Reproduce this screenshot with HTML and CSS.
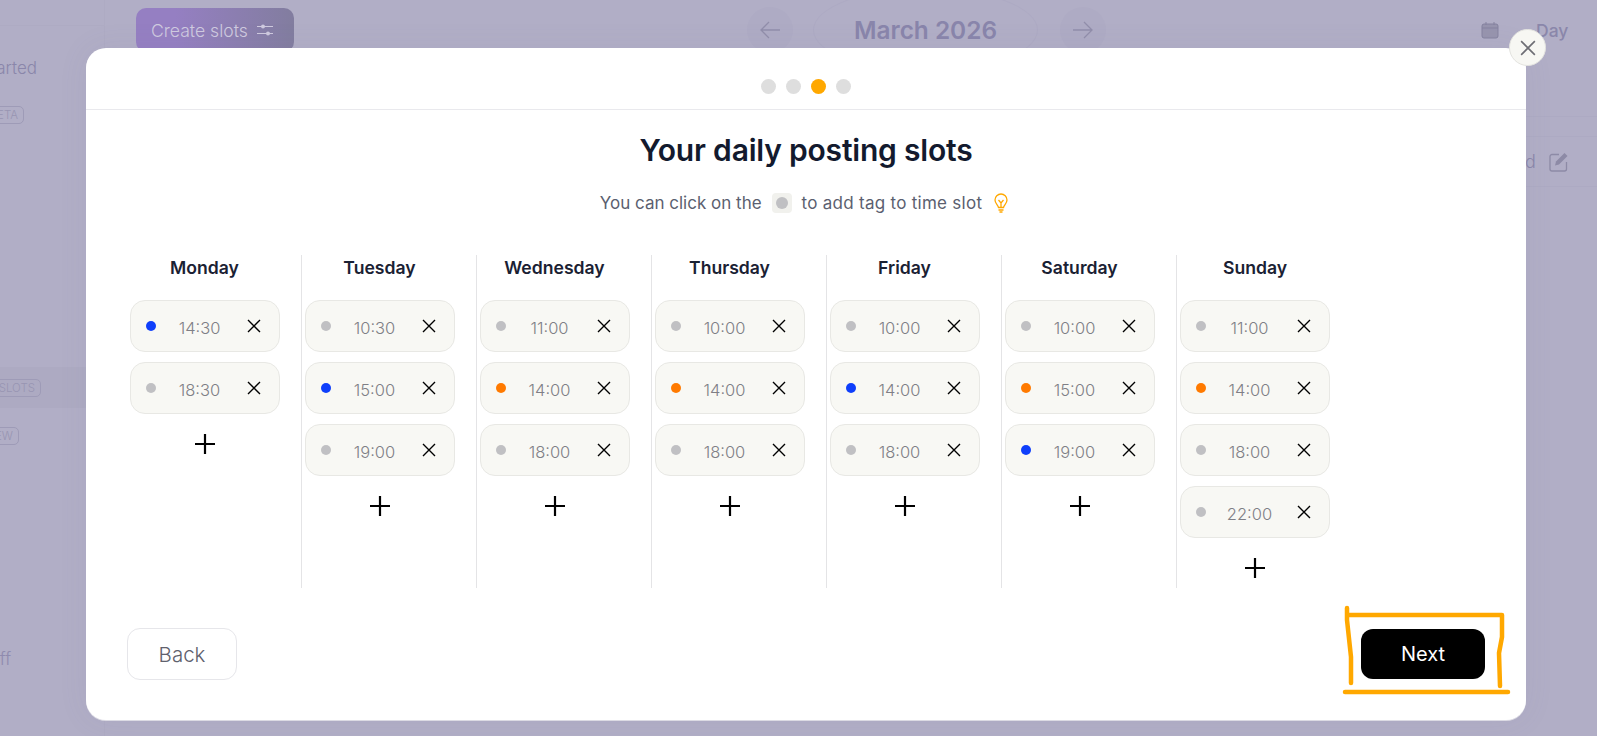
FILE: index.html
```html
<!DOCTYPE html>
<html lang="en">
<head>
    <meta charset="UTF-8">
    <meta name="viewport" content="width=device-width, initial-scale=1.0">
    <title>Your daily posting slots</title>
    <link rel="stylesheet" href="styles.css">
</head>
<body>
    <svg class="defs" width="0" height="0">
        <symbol id="cross" viewBox="0 0 14 14"><path d="M1 1l12 12M13 1L1 13" fill="none" stroke="currentColor" stroke-width="1.4"/></symbol>
        <symbol id="plus" viewBox="0 0 20 20"><path d="M0 10h20M10 0v20" fill="none" stroke="currentColor" stroke-width="2.2"/></symbol>
    </svg>

    <!-- dimmed page behind the modal -->
    <div class="app">
        <aside class="sidebar">
            <div class="side-top"></div>
            <div class="side-item side-started">Get started</div>
            <div class="side-item side-beta"><span class="badge">BETA</span></div>
            <div class="side-item side-slots"><span class="badge">SLOTS</span></div>
            <div class="side-item side-new"><span class="badge">NEW</span></div>
            <div class="side-item side-off">Off</div>
        </aside>
        <main class="main">
            <div class="topbar">
                <button class="create-btn">Create slots
                    <svg width="16" height="14" viewBox="0 0 16 14"><path d="M0 3.5h16M0 10.5h16" stroke="currentColor" fill="none"/><circle cx="6" cy="3.5" r="2" fill="currentColor"/><circle cx="11" cy="10.5" r="2" fill="currentColor"/></svg>
                </button>
                <div class="arrow-btn arrow-prev">
                    <svg width="20" height="18" viewBox="0 0 20 18"><path d="M20 9H1M9 1L1 9l8 8" fill="none" stroke="currentColor" stroke-width="1.3"/></svg>
                </div>
                <div class="month">March 2026</div>
                <div class="arrow-btn">
                    <svg width="20" height="18" viewBox="0 0 20 18"><path d="M0 9h19M11 1l8 8-8 8" fill="none" stroke="currentColor" stroke-width="1.3"/></svg>
                </div>
                <svg class="cal-icon" width="18" height="18" viewBox="0 0 18 18"><rect x="1" y="3" width="16" height="14" rx="2" fill="#9794ae" stroke="#85829f"/><path d="M1 7h16M5 1v3M13 1v3" stroke="#85829f" fill="none"/></svg>
                <div class="view-switch">Day</div>
            </div>
            <div class="board">
                <div class="board-row board-row-short"></div>
                <div class="board-row board-row-edit">
                    <span class="board-text">d</span>
                    <svg width="20" height="20" viewBox="0 0 20 20"><path d="M10 2.5H3a2 2 0 0 0-2 2V17a2 2 0 0 0 2 2h12.500a2 2 0 0 0 2-2v-7" fill="none" stroke="#8d8aa6" stroke-width="1.300"/><path d="M15.500 1l3 3-8.500 8.500-4 1 1-4z" fill="#8d8aa6"/></svg>
                </div>
            </div>
        </main>
    </div>

    <div class="modal">
        <button class="modal-close"><svg width="16" height="16"><use href="#cross"/></svg></button>

        <div class="modal-head">
            <span class="step"></span>
            <span class="step"></span>
            <span class="step step-on"></span>
            <span class="step"></span>
        </div>

        <h1 class="title">Your daily posting slots</h1>
        <p class="hint">
            You can click on the
            <span class="hint-chip"><span class="dot"></span></span>
            <span class="hint-tail">to add tag to time slot</span>
            <svg class="bulb" width="14" height="20" viewBox="0 0 14 20"><path d="M4.500 14.500C4 12 1 10.500 1 7a6 6 0 0 1 12 0c0 3.500-3 5-3.500 7.500z" fill="none" stroke="#ffa800" stroke-width="1.300"/><path d="M4.500 7L7 10l2.500-3M7 10v4M4.500 17h5M5.500 19h3" fill="none" stroke="#ffa800" stroke-width="1.300"/></svg>
        </p>

        <div class="days">
            <section class="day">
                <h3>Monday</h3>
                <div class="slot"><span class="dot dot-blue"></span><span class="time">14:30</span><svg class="x"><use href="#cross"/></svg></div>
                <div class="slot"><span class="dot"></span><span class="time">18:30</span><svg class="x"><use href="#cross"/></svg></div>
                <svg class="add"><use href="#plus"/></svg>
            </section>
            <section class="day">
                <h3>Tuesday</h3>
                <div class="slot"><span class="dot"></span><span class="time">10:30</span><svg class="x"><use href="#cross"/></svg></div>
                <div class="slot"><span class="dot dot-blue"></span><span class="time">15:00</span><svg class="x"><use href="#cross"/></svg></div>
                <div class="slot"><span class="dot"></span><span class="time">19:00</span><svg class="x"><use href="#cross"/></svg></div>
                <svg class="add"><use href="#plus"/></svg>
            </section>
            <section class="day">
                <h3>Wednesday</h3>
                <div class="slot"><span class="dot"></span><span class="time">11:00</span><svg class="x"><use href="#cross"/></svg></div>
                <div class="slot"><span class="dot dot-orange"></span><span class="time">14:00</span><svg class="x"><use href="#cross"/></svg></div>
                <div class="slot"><span class="dot"></span><span class="time">18:00</span><svg class="x"><use href="#cross"/></svg></div>
                <svg class="add"><use href="#plus"/></svg>
            </section>
            <section class="day">
                <h3>Thursday</h3>
                <div class="slot"><span class="dot"></span><span class="time">10:00</span><svg class="x"><use href="#cross"/></svg></div>
                <div class="slot"><span class="dot dot-orange"></span><span class="time">14:00</span><svg class="x"><use href="#cross"/></svg></div>
                <div class="slot"><span class="dot"></span><span class="time">18:00</span><svg class="x"><use href="#cross"/></svg></div>
                <svg class="add"><use href="#plus"/></svg>
            </section>
            <section class="day">
                <h3>Friday</h3>
                <div class="slot"><span class="dot"></span><span class="time">10:00</span><svg class="x"><use href="#cross"/></svg></div>
                <div class="slot"><span class="dot dot-blue"></span><span class="time">14:00</span><svg class="x"><use href="#cross"/></svg></div>
                <div class="slot"><span class="dot"></span><span class="time">18:00</span><svg class="x"><use href="#cross"/></svg></div>
                <svg class="add"><use href="#plus"/></svg>
            </section>
            <section class="day">
                <h3>Saturday</h3>
                <div class="slot"><span class="dot"></span><span class="time">10:00</span><svg class="x"><use href="#cross"/></svg></div>
                <div class="slot"><span class="dot dot-orange"></span><span class="time">15:00</span><svg class="x"><use href="#cross"/></svg></div>
                <div class="slot"><span class="dot dot-blue"></span><span class="time">19:00</span><svg class="x"><use href="#cross"/></svg></div>
                <svg class="add"><use href="#plus"/></svg>
            </section>
            <section class="day day-last">
                <h3>Sunday</h3>
                <div class="slot"><span class="dot"></span><span class="time">11:00</span><svg class="x"><use href="#cross"/></svg></div>
                <div class="slot"><span class="dot dot-orange"></span><span class="time">14:00</span><svg class="x"><use href="#cross"/></svg></div>
                <div class="slot"><span class="dot"></span><span class="time">18:00</span><svg class="x"><use href="#cross"/></svg></div>
                <div class="slot"><span class="dot"></span><span class="time">22:00</span><svg class="x"><use href="#cross"/></svg></div>
                <svg class="add"><use href="#plus"/></svg>
            </section>
        </div>

        <div class="modal-foot">
            <button class="btn-back">Back</button>
            <button class="btn-next">Next</button>
        </div>
    </div>

    <!-- hand drawn highlight around Next -->
    <svg class="scribble" width="180" height="100" viewBox="0 0 180 100">
        <path d="M7 8v12l4 37v26M7 15h155M162 15v22l-3 16 1 33M5 92h163" fill="none" stroke="#ffa800" stroke-width="4.500" stroke-linecap="round" stroke-linejoin="round"/>
    </svg>
</body>
</html>
```

FILE: styles.css
```css
*
{
    box-sizing: border-box;
}
body
{
    margin: 0;
    height: 736px;
    overflow: hidden;
    position: relative;
    background-color: #b1aec6;
    font-family: "Inter", "Liberation Sans", sans-serif;
}
button
{
    font-family: inherit;
    cursor: pointer;
}
.defs
{
    position: absolute;
}

/* page behind */
.app
{
    display: flex;
    height: 736px;
    color: #8a86aa;
}
.sidebar
{
    width: 105px;
    flex: none;
    border-right: 1px solid #aeabc3;
}
.side-top
{
    height: 26px;
    border-bottom: 1px solid #aeabc3;
}
.side-item
{
    display: flex;
    justify-content: flex-end;
    white-space: nowrap;
    font-size: 17px;
    font-weight: 300;
}
.side-started
{
    margin-top: 31px;
    height: 22px;
    padding-right: 67px;
    line-height: 22px;
}
.side-beta
{
    margin-top: 27px;
    padding-right: 80px;
}
.side-slots
{
    margin-top: 243px;
    height: 41px;
    align-items: center;
    padding-right: 63px;
    background-color: #adaac2;
}
.side-new
{
    margin-top: 19px;
    padding-right: 85px;
}
.side-off
{
    margin-top: 204px;
    padding-right: 93px;
    color: #8f8bae;
}
.badge
{
    height: 18px;
    padding: 0 5px;
    border: 1px solid #9e9bb7;
    border-radius: 5px;
    font-size: 11.5px;
    line-height: 16px;
    color: #9895b2;
}
.main
{
    flex: 1;
    min-width: 0;
}
.topbar
{
    display: flex;
    align-items: center;
    height: 60px;
    padding-left: 31px;
}
.create-btn
{
    display: flex;
    align-items: center;
    gap: 9px;
    width: 158px;
    height: 44px;
    padding: 0 15px;
    border: none;
    border-radius: 10px;
    background: linear-gradient(90deg, #957fc2 25%, #827d9f 100%);
    color: #cfcadf;
    font-size: 17.6px;
    font-weight: 300;
}
.arrow-btn
{
    display: flex;
    align-items: center;
    justify-content: center;
    width: 46px;
    height: 46px;
    flex: none;
    border-radius: 50%;
    background-color: #aeabc4;
    color: #918eaa;
}
.arrow-prev
{
    margin-left: 453px;
}
.month
{
    width: 225px;
    height: 84px;
    margin: 0 22px 0 20px;
    flex: none;
    border: 1px solid #adaac3;
    border-radius: 50%;
    font-size: 24.4px;
    font-weight: 600;
    line-height: 82px;
    text-align: center;
    color: #8985ab;
}
.cal-icon
{
    margin-left: 375px;
    flex: none;
}
.view-switch
{
    margin-left: 37px;
    font-size: 17.5px;
    font-weight: 500;
}
.board
{
    margin-left: 1400px;
    margin-top: 56px;
}
.board-row
{
    border-top: 1px solid #adaac3;
}
.board-row-short
{
    height: 20px;
}
.board-row-edit
{
    display: flex;
    align-items: center;
    gap: 13px;
    height: 51px;
    padding-left: 20px;
    border-bottom: 1px solid #adaac3;
    font-size: 18px;
    font-weight: 300;
}

/* modal */
.modal
{
    position: absolute;
    left: 86px;
    top: 48px;
    width: 1440px;
    height: 672px;
    padding: 0 41px;
    background-color: #fff;
    border-radius: 20px;
    box-shadow: 0 1px 0 #dcdbe4, 0 0 30px rgba(120, 115, 150, 0.08);
}
.modal-close
{
    position: absolute;
    right: -20px;
    top: -19px;
    display: flex;
    align-items: center;
    justify-content: center;
    width: 37px;
    height: 37px;
    padding: 0;
    border: 1px solid #e3e3df;
    border-radius: 50%;
    background-color: #f7f7f3;
    color: #6d6d74;
}
.modal-head
{
    display: flex;
    align-items: center;
    justify-content: center;
    gap: 10px;
    height: 62px;
    margin: 0 -41px;
    padding-top: 16px;
    border-bottom: 1px solid #e9e9ed;
}
.step
{
    width: 15px;
    height: 15px;
    border-radius: 50%;
    background-color: #dedede;
}
.step-on
{
    background-color: #ffa800;
}
.title
{
    margin: 20px 0 0;
    font-size: 30px;
    font-weight: 600;
    letter-spacing: -0.2px;
    line-height: 40px;
    text-align: center;
    color: #131a2e;
}
.hint
{
    display: flex;
    align-items: center;
    justify-content: center;
    gap: 10px;
    height: 24px;
    margin: 21px 0 0;
    padding-right: 4px;
    font-size: 17px;
    color: #5b5f70;
}
.hint-tail
{
    letter-spacing: 0.27px;
}
.hint-chip
{
    display: flex;
    align-items: center;
    justify-content: center;
    width: 20px;
    height: 20px;
    border-radius: 4px;
    background-color: #f1f1ed;
}
.hint-chip .dot
{
    width: 12px;
    height: 12px;
}
.bulb
{
    margin-left: 2px;
}
.days
{
    display: flex;
    height: 333px;
    margin-top: 40px;
}
.day
{
    width: 175px;
    padding: 0 22px 0 3px;
    border-right: 1px solid #e4e4e6;
}
.day-last
{
    border-right: none;
}
.day h3
{
    margin: 0 0 20px;
    padding-top: 1px;
    font-size: 17.6px;
    font-weight: 600;
    line-height: 24px;
    text-align: center;
    color: #1a2133;
}
.slot
{
    display: flex;
    align-items: center;
    justify-content: space-between;
    width: 150px;
    height: 52px;
    margin-bottom: 10px;
    padding: 0 18px 0 15px;
    background-color: #f8f8f4;
    border: 1px solid #e8e8e4;
    border-radius: 15px;
}
.dot
{
    width: 10px;
    height: 10px;
    border-radius: 50%;
    background-color: #c0c0c3;
}
.dot-blue
{
    background-color: #0f3ffb;
}
.dot-orange
{
    background-color: #ff7a00;
}
.time
{
    margin-right: 4px;
    padding-top: 4px;
    font-size: 16.5px;
    font-weight: 300;
    color: #7f7f86;
}
.x
{
    width: 14px;
    height: 14px;
    color: #000;
}
.add
{
    display: block;
    width: 20px;
    height: 20px;
    margin: 20px 0 0 65px;
    color: #000;
}
.modal-foot
{
    display: flex;
    align-items: center;
    justify-content: space-between;
    margin-top: 40px;
}
.btn-back
{
    width: 110px;
    height: 52px;
    background-color: #fff;
    border: 1px solid #e6e6ea;
    border-radius: 13px;
    font-size: 20.5px;
    font-weight: 300;
    color: #5f616d;
}
.btn-next
{
    width: 124px;
    height: 50px;
    background-color: #000;
    border: none;
    border-radius: 12px;
    font-size: 20px;
    color: #fff;
}
.scribble
{
    position: absolute;
    left: 1340px;
    top: 600px;
}
```
